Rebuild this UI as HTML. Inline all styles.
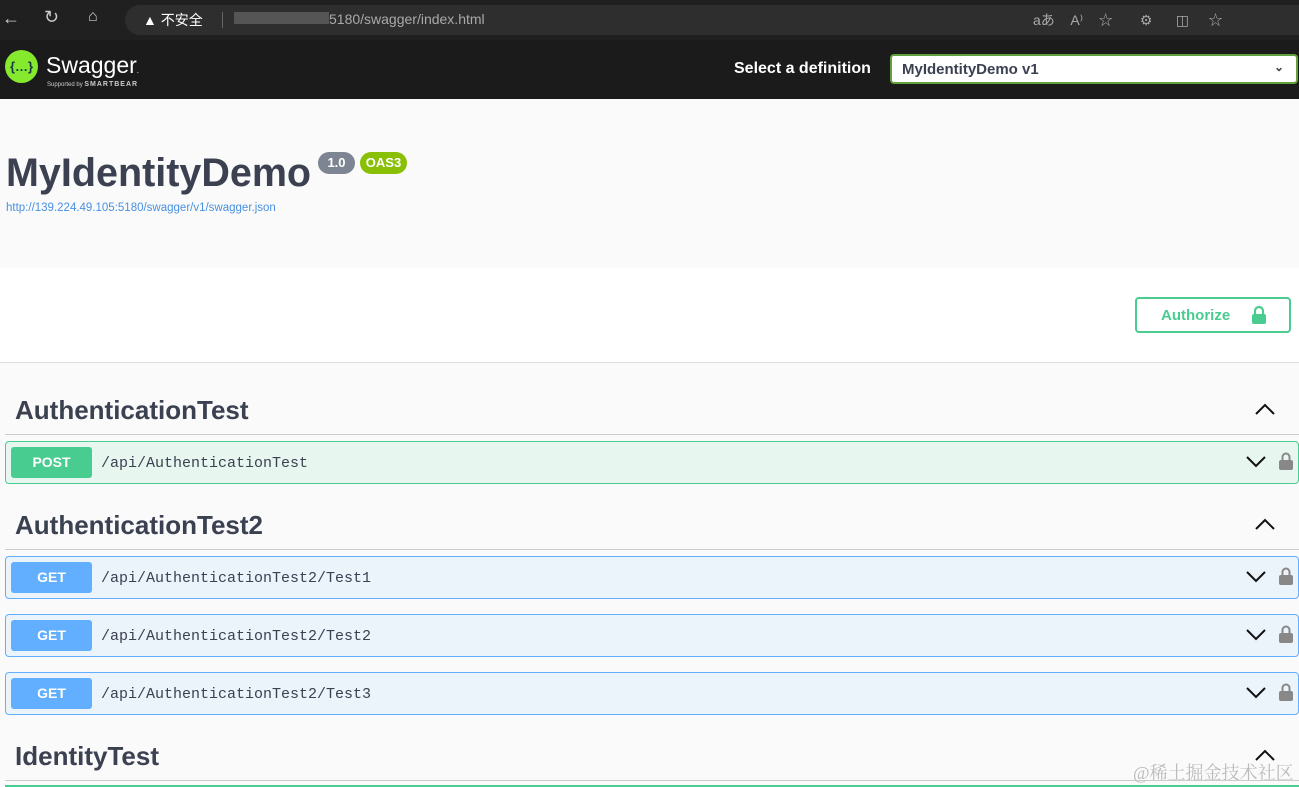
<!DOCTYPE html>
<html><head><meta charset="utf-8"><style>
*{box-sizing:border-box;margin:0;padding:0}
body{width:1299px;height:787px;overflow:hidden;background:#fafafa;font-family:"Liberation Sans","Noto Sans CJK SC",sans-serif;position:relative}
.abs{position:absolute}
.browser{left:0;top:0;width:1299px;height:40px;background:#202020}
.pill{left:125px;top:5px;width:1275px;height:30px;background:#2e2e2e;border-radius:15px}
.top{left:0;top:40px;width:1299px;height:59px;background:#1b1b1b}
.sel{left:890px;top:54px;width:408px;height:30px;background:#fff;border:2px solid #62a03f;border-radius:4px;font-weight:bold;font-size:15px;color:#3b4151;padding:5px 10px}
.info{left:0;top:99px;width:1299px;height:169px;background:#fafafa}
.auth{left:0;top:268px;width:1299px;height:95px;background:#fff;border-bottom:1px solid #ddd}
.btn{left:1135px;top:297px;width:156px;height:36px;border:2px solid #49cc90;border-radius:4px;color:#49cc90;font-weight:bold;font-size:15px;padding:8px 0 0 24px}
.h{left:15px;font-weight:bold;font-size:26px;color:#3b4151}
.line{left:5px;width:1294px;height:1px;background:#ccc}
.op{left:5px;width:1294px;height:43px;border-radius:4px;border:1px solid}
.post{background:#e8f6f0;border-color:#49cc90}
.get{background:#ebf3fb;border-color:#61affe}
.m{position:absolute;left:5px;top:5px;width:81px;height:31px;border-radius:3px;color:#fff;font-weight:bold;font-size:14px;text-align:center;line-height:31px}
.path{position:absolute;left:95px;top:13px;font-family:"Liberation Mono",monospace;font-size:15px;color:#3b4151}
.chev{position:absolute;right:32px;top:14px}
.lock{position:absolute;right:5px;top:10px}
</style></head><body>
<div class="abs browser"></div>
<div class="abs pill"></div>
<div class="abs" style="left:2px;top:8px;color:#ccc;font-size:18px">←</div>
<div class="abs" style="left:44px;top:7px;color:#ccc;font-size:18px">↻</div>
<div class="abs" style="left:88px;top:8px;color:#ccc;font-size:16px">⌂</div>
<div class="abs" style="left:143px;top:10px;color:#fff;font-size:14px">▲ 不安全</div>
<div class="abs" style="left:222px;top:12px;width:1px;height:16px;background:#666"></div>
<div class="abs" style="left:234px;top:12px;width:95px;height:12px;background:#555"></div>
<div class="abs" style="left:329px;top:11px;color:#aaa;font-size:14px">5180/swagger/index.html</div>
<div class="abs" style="left:1033px;top:10px;color:#aaa;font-size:14px">aあ&nbsp;&nbsp;&nbsp;&nbsp;A⁾&nbsp;&nbsp;&nbsp;&nbsp;☆&nbsp;&nbsp;&nbsp;&nbsp;&nbsp;&nbsp;&nbsp;⚙&nbsp;&nbsp;&nbsp;&nbsp;&nbsp;&nbsp;◫&nbsp;&nbsp;&nbsp;&nbsp;&nbsp;☆</div>
<div class="abs top"></div>
<div class="abs" style="left:5px;top:50px;width:33px;height:33px;border-radius:50%;background:#85ea2d;color:#173647;font-weight:bold;font-size:13px;text-align:center;line-height:33px">{…}</div>
<div class="abs" style="left:46px;top:52px;color:#fff;font-size:23px">Swagger<span style="font-size:8px">.</span></div>
<div class="abs" style="left:47px;top:81px;color:#ccc;font-size:6px">Supported by <b style="font-size:7px;letter-spacing:1px">SMARTBEAR</b></div>
<div class="abs" style="left:734px;top:60px;color:#fff;font-weight:bold;font-size:16px">Select a definition</div>
<div class="abs sel">MyIdentityDemo v1<span style="position:absolute;right:12px;top:4px;font-size:12px">⌄</span></div>
<div class="abs info"></div>
<div class="abs" style="left:6px;top:151px;font-weight:bold;font-size:39.5px;color:#3b4151">MyIdentityDemo</div>
<div class="abs" style="left:318px;top:152px;width:37px;height:22px;border-radius:11px;background:#7d8492;color:#fff;font-weight:bold;font-size:13px;text-align:center;line-height:22px">1.0</div>
<div class="abs" style="left:360px;top:152px;width:47px;height:22px;border-radius:11px;background:#89bf04;color:#fff;font-weight:bold;font-size:13px;text-align:center;line-height:22px">OAS3</div>
<div class="abs" style="left:6px;top:202px;font-size:11.5px;color:#4990e2">http://139.224.49.105:5180/swagger/v1/swagger.json</div>
<div class="abs auth"></div>
<div class="abs btn">Authorize<svg style="position:absolute;left:114px;top:6px" width="16" height="20" viewBox="0 0 16 20"><path d="M4 9V6a4 4 0 0 1 8 0v3" fill="none" stroke="#49cc90" stroke-width="2.2"/><rect x="1" y="9" width="14" height="10" rx="2" fill="#49cc90"/></svg></div>

<div class="abs h" style="top:395px">AuthenticationTest</div>
<svg class="abs" style="left:1255px;top:403px" width="20" height="12"><path d="M1 11 10 2 19 11" fill="none" stroke="#111" stroke-width="2"/></svg>
<div class="abs line" style="top:434px"></div>
<div class="abs op post" style="top:441px"><div class="m" style="background:#49cc90">POST</div><div class="path">/api/AuthenticationTest</div>
<svg class="chev" width="20" height="12"><path d="M1 1 10 10 19 1" fill="none" stroke="#111" stroke-width="2"/></svg>
<svg class="lock" width="14" height="18" viewBox="0 0 14 18"><path d="M3.5 8V5a3.5 3.5 0 0 1 7 0v3" fill="none" stroke="#888" stroke-width="2"/><rect x="0" y="8" width="14" height="10" rx="2" fill="#888"/></svg></div>

<div class="abs h" style="top:510px">AuthenticationTest2</div>
<svg class="abs" style="left:1255px;top:518px" width="20" height="12"><path d="M1 11 10 2 19 11" fill="none" stroke="#111" stroke-width="2"/></svg>
<div class="abs line" style="top:549px"></div>

<div class="abs op get" style="top:556px"><div class="m" style="background:#61affe">GET</div><div class="path">/api/AuthenticationTest2/Test1</div>
<svg class="chev" width="20" height="12"><path d="M1 1 10 10 19 1" fill="none" stroke="#111" stroke-width="2"/></svg>
<svg class="lock" width="14" height="18" viewBox="0 0 14 18"><path d="M3.5 8V5a3.5 3.5 0 0 1 7 0v3" fill="none" stroke="#888" stroke-width="2"/><rect x="0" y="8" width="14" height="10" rx="2" fill="#888"/></svg></div>
<div class="abs op get" style="top:614px"><div class="m" style="background:#61affe">GET</div><div class="path">/api/AuthenticationTest2/Test2</div>
<svg class="chev" width="20" height="12"><path d="M1 1 10 10 19 1" fill="none" stroke="#111" stroke-width="2"/></svg>
<svg class="lock" width="14" height="18" viewBox="0 0 14 18"><path d="M3.5 8V5a3.5 3.5 0 0 1 7 0v3" fill="none" stroke="#888" stroke-width="2"/><rect x="0" y="8" width="14" height="10" rx="2" fill="#888"/></svg></div>
<div class="abs op get" style="top:672px"><div class="m" style="background:#61affe">GET</div><div class="path">/api/AuthenticationTest2/Test3</div>
<svg class="chev" width="20" height="12"><path d="M1 1 10 10 19 1" fill="none" stroke="#111" stroke-width="2"/></svg>
<svg class="lock" width="14" height="18" viewBox="0 0 14 18"><path d="M3.5 8V5a3.5 3.5 0 0 1 7 0v3" fill="none" stroke="#888" stroke-width="2"/><rect x="0" y="8" width="14" height="10" rx="2" fill="#888"/></svg></div>

<div class="abs h" style="top:741px">IdentityTest</div>
<svg class="abs" style="left:1255px;top:749px" width="20" height="12"><path d="M1 11 10 2 19 11" fill="none" stroke="#111" stroke-width="2"/></svg>
<div class="abs" style="left:1133px;top:759px;font-size:18px;color:#bbb;font-family:'Liberation Serif','Noto Serif CJK SC',serif">@稀土掘金技术社区</div>
<div class="abs line" style="top:780px"></div>
<div class="abs" style="left:5px;top:785px;width:1294px;height:2px;background:#49cc90"></div>
</body></html>
